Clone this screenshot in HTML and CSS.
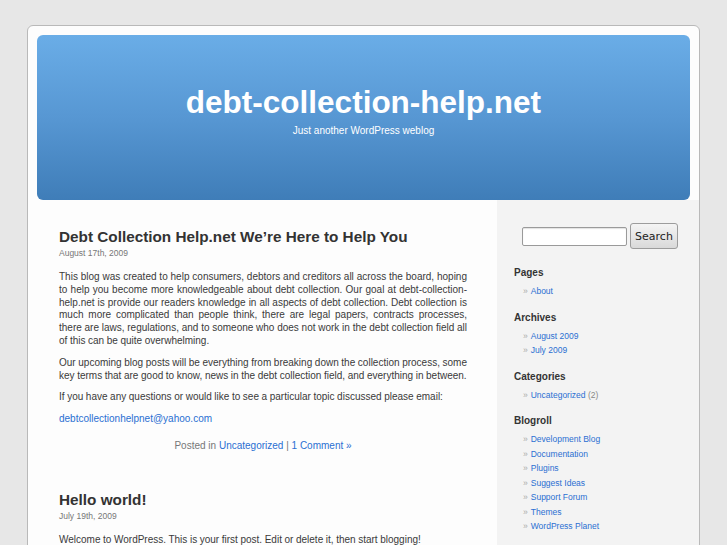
FILE: index.html
```html
<!DOCTYPE html>
<html lang="en">
<head>
<meta charset="utf-8">
<title>debt-collection-help.net</title>
<link rel="stylesheet" href="styles.css">
</head>
<body>
<div class="page">
  <header class="header">
    <h1 class="site-title">debt-collection-help.net</h1>
    <p class="site-desc">Just another WordPress weblog</p>
  </header>
  <div class="body-row">
    <main class="content">
      <article class="post">
        <h2 class="post-title">Debt Collection Help.net We’re Here to Help You</h2>
        <div class="post-date">August 17th, 2009</div>
        <div class="entry">
          <p>This blog was created to help consumers, debtors and creditors all across the board, hoping to help you become more knowledgeable about debt collection. Our goal at debt-collection-help.net is provide our readers knowledge in all aspects of debt collection. Debt collection is much more complicated than people think, there are legal papers, contracts processes, there are laws, regulations, and to someone who does not work in the debt collection field all of this can be quite overwhelming.</p>
          <p>Our upcoming blog posts will be everything from breaking down the collection process, some key terms that are good to know, news in the debt collection field, and everything in between.</p>
          <p>If you have any questions or would like to see a particular topic discussed please email:</p>
          <p><a class="link" href="#">debtcollectionhelpnet@yahoo.com</a></p>
        </div>
        <p class="postmeta">Posted in <a class="link" href="#">Uncategorized</a> | <a class="link" href="#">1 Comment »</a></p>
      </article>
      <article class="post">
        <h2 class="post-title">Hello world!</h2>
        <div class="post-date">July 19th, 2009</div>
        <div class="entry">
          <p>Welcome to WordPress. This is your first post. Edit or delete it, then start blogging!</p>
        </div>
        <p class="postmeta">Posted in <a class="link" href="#">Uncategorized</a> | <a class="link" href="#">1 Comment »</a></p>
      </article>
    </main>
    <aside class="sidebar">
      <form class="search">
        <input class="search-input" type="text">
        <button class="search-btn" type="button">Search</button>
      </form>
      <section class="widget">
        <h3 class="widget-title">Pages</h3>
        <ul class="widget-list">
          <li><a class="link" href="#">About</a></li>
        </ul>
      </section>
      <section class="widget">
        <h3 class="widget-title">Archives</h3>
        <ul class="widget-list">
          <li><a class="link" href="#">August 2009</a></li>
          <li><a class="link" href="#">July 2009</a></li>
        </ul>
      </section>
      <section class="widget">
        <h3 class="widget-title">Categories</h3>
        <ul class="widget-list">
          <li><a class="link" href="#">Uncategorized</a> <span class="count">(2)</span></li>
        </ul>
      </section>
      <section class="widget">
        <h3 class="widget-title">Blogroll</h3>
        <ul class="widget-list">
          <li><a class="link" href="#">Development Blog</a></li>
          <li><a class="link" href="#">Documentation</a></li>
          <li><a class="link" href="#">Plugins</a></li>
          <li><a class="link" href="#">Suggest Ideas</a></li>
          <li><a class="link" href="#">Support Forum</a></li>
          <li><a class="link" href="#">Themes</a></li>
          <li><a class="link" href="#">WordPress Planet</a></li>
        </ul>
      </section>
    </aside>
  </div>
</div>
</body>
</html>
```
FILE: styles.css
```css
html, body {
  margin: 0;
  padding: 0;
}
body {
  background: #e7e7e7;
  font-family: "Liberation Sans", Arial, sans-serif;
  color: #333;
  overflow: hidden;
}
.page {
  box-sizing: border-box;
  width: 673px;
  margin: 25px 0 0 27px;
  background: #fdfdfd;
  border: 1px solid #b9b9b9;
  border-radius: 6px;
  min-height: 700px;
  overflow: hidden;
}
.header {
  height: 165px;
  margin: 9px 9px 0 9px;
  border-radius: 6px;
  background: linear-gradient(to bottom, #6aade7 0%, #5797d3 50%, #3f7db8 100%);
  text-align: center;
  color: #fff;
  padding-top: 48px;
  box-sizing: border-box;
}
.site-title {
  margin: 0;
  font-size: 31.5px;
  line-height: 38px;
  font-weight: bold;
}
.site-desc {
  margin: 4px 0 0;
  font-size: 10px;
  line-height: 12px;
}
.body-row {
  display: flex;
}
.content {
  width: 469px;
  box-sizing: border-box;
  padding: 28px 30px 0 31px;
  background: #fdfdfd;
}
.post {
  margin-bottom: 38.5px;
}
.post-title {
  margin: 0;
  font-size: 15.3px;
  line-height: 18px;
  font-weight: bold;
  color: #333;
}
.post-date {
  margin-top: 2px;
  font-size: 8.5px;
  line-height: 11px;
  color: #777;
}
.entry {
  margin-top: 12px;
  font-size: 10px;
  line-height: 12.8px;
  word-spacing: -0.2px;
  text-align: justify;
  color: #3a3a3a;
}
.entry p {
  margin: 0 0 9px;
}
.entry p:last-child {
  margin-bottom: 0;
}
.link {
  color: #2a6fd2;
  text-decoration: none;
}
.postmeta {
  margin: 13.5px 0 0;
  text-align: center;
  font-size: 10px;
  line-height: 13px;
  color: #777;
}
.sidebar {
  flex: 1;
  background: #f3f3f3;
  padding: 24px 0 0 17px;
  min-height: 600px;
}
.search {
  display: flex;
  align-items: center;
  gap: 3px;
  margin: -1px 0 18px 8px;
}
.search-input {
  box-sizing: border-box;
  width: 105px;
  height: 19px;
  margin: 0;
  border: 1px solid #9a9a9a;
  border-radius: 2px;
  background: #fff;
  box-shadow: inset 0 1px 1px rgba(0,0,0,0.12);
}
.search-btn {
  box-sizing: border-box;
  width: 48px;
  height: 26px;
  margin: 0;
  padding: 0;
  border: 1px solid #9c9c9c;
  border-radius: 3px;
  background: linear-gradient(to bottom, #f4f4f4, #d9d9d9);
  font-family: "DejaVu Sans", sans-serif;
  font-size: 11px;
  color: #222;
}
.widget {
  margin-bottom: 13px;
}
.widget-title {
  margin: 0 0 5px;
  height: 12px;
  font-size: 10px;
  line-height: 12px;
  font-weight: bold;
  color: #333;
}
.widget-list {
  list-style: none;
  margin: 0;
  padding: 0 0 0 9px;
}
.widget-list li {
  height: 14.5px;
  font-size: 8.5px;
  line-height: 14.5px;
  white-space: nowrap;
}
.widget-list li::before {
  content: "»";
  color: #aaa;
  margin-right: 3px;
}
.count {
  color: #888;
}
```
